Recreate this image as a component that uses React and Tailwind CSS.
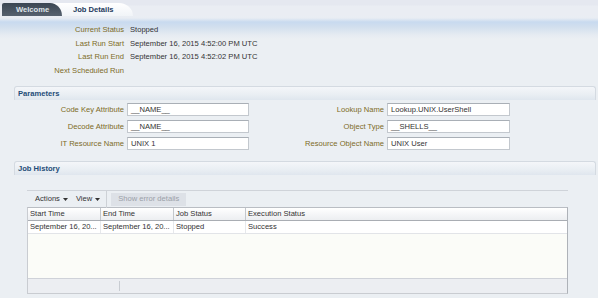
import React from "react";

function Caret() {
  return (
    <svg width="5" height="3" viewBox="0 0 5 3" className="ml-[3px] mt-[1px]">
      <path d="M0 0 L5 0 L2.5 3 Z" fill="#333" />
    </svg>
  );
}

function InfoRow({ label, value }) {
  return (
    <div className="flex h-[13.5px] items-center">
      <div className="w-[124px] text-right text-[#7d6b26]">{label}</div>
      <div className="ml-[6px] text-[#333]">{value}</div>
    </div>
  );
}

function Field({ label, value, labelW, inputW }) {
  return (
    <div className="flex h-[17px] items-center">
      <div className="text-right text-[#7d6b26]" style={{ width: labelW }}>
        {label}
      </div>
      <div
        className="ml-[3px] h-[13px] border border-[#c3c8ce] border-t-[#a9afb6] bg-white pl-[3px] leading-[11px] text-[#333]"
        style={{ width: inputW }}
      >
        {value}
      </div>
    </div>
  );
}

function SectionHeader({ title }) {
  return (
    <div className="flex h-[14px] items-center rounded-t-[3px] border-l border-r border-t border-[#d4dae1] bg-[linear-gradient(to_bottom,#f4f6f9,#e9eef3_60%,#dfe6ee)] pl-[3px] font-bold text-[#1f4d78]">
      {title}
    </div>
  );
}

export default function App() {
  return (
    <div className="h-[298px] w-[598px] overflow-hidden bg-[#ebeff3] font-['Liberation_Sans',Arial,sans-serif] text-[7.6px] text-[#333]">
      {/* Tabs */}
      <div className="flex h-[16px] items-end bg-[linear-gradient(to_bottom,#e5e8f0_0px,#e5e8f0_5px,#eaedf3_6px)] pl-[2px]">
        <div className="relative z-10 flex h-[13px] w-[60px] items-center rounded-tl-[2px] rounded-tr-[12px_13px] bg-[linear-gradient(to_bottom,#3b4653,#56616e)] pl-[14px] font-bold text-[#dfe4ea]">
          Welcome
        </div>
        <div className="-ml-[12px] flex h-[13px] w-[83px] items-center rounded-tr-[14px_13px] bg-[linear-gradient(to_bottom,#ffffff,#f1f4f8)] pl-[23px] font-bold text-[#1d3a5c]">
          Job Details
        </div>
      </div>

      {/* Info */}
      <div className="bg-[linear-gradient(to_bottom,#eaeef4_0px,#e9edf3_2px,#c8daef_6px,#d2dfee_11px,#e6ebf2_19px,#ebeff3_23px)] pt-[7px]">
        <InfoRow label="Current Status" value="Stopped" />
        <InfoRow label="Last Run Start" value="September 16, 2015 4:52:00 PM UTC" />
        <InfoRow label="Last Run End" value="September 16, 2015 4:52:02 PM UTC" />
        <InfoRow label="Next Scheduled Run" value="" />
      </div>

      {/* Parameters */}
      <div className="ml-[14px] mr-[2px] mt-[9px]">
        <SectionHeader title="Parameters" />
        <div className="flex pt-[1px]">
          <div className="flex flex-col">
            <Field label="Code Key Attribute" value="__NAME__" labelW={110} inputW={122} />
            <Field label="Decode Attribute" value="__NAME__" labelW={110} inputW={122} />
            <Field label="IT Resource Name" value="UNIX 1" labelW={110} inputW={122} />
          </div>
          <div className="flex flex-col">
            <Field label="Lookup Name" value="Lookup.UNIX.UserShell" labelW={135} inputW={123} />
            <Field label="Object Type" value="__SHELLS__" labelW={135} inputW={123} />
            <Field label="Resource Object Name" value="UNIX User" labelW={135} inputW={123} />
          </div>
        </div>
      </div>

      {/* Job History */}
      <div className="ml-[14px] mr-[2px] mt-[9px]">
        <SectionHeader title="Job History" />
        <div className="ml-[13px] mt-[15px] w-[541px]">
          {/* toolbar */}
          <div className="flex h-[17px] items-center border-t border-[#cfd3d9]">
            <div className="flex items-center pl-[8px]">
              Actions
              <Caret />
            </div>
            <div className="ml-[8px] flex items-center">
              View
              <Caret />
            </div>
            <div className="ml-[6px] h-[17px] w-px bg-[#cdd1d6]" />
            <div className="ml-[4px] flex h-[13px] w-[75px] items-center justify-center bg-[#dde1e7] text-[#9aa0a8]">
              Show error details
            </div>
          </div>
          {/* table */}
          <div className="flex h-[87px] flex-col border border-t-[#b9bdc3] border-[#c9ccd1] border-r-[#aeb2b8]">
            <div className="flex h-[13px] border-b border-[#a9adb3] bg-[linear-gradient(to_bottom,#ffffff,#eceef1)]">
              <div className="w-[73px] border-r border-[#c3c7cc] pl-[2px] leading-[12px]">Start Time</div>
              <div className="w-[73px] border-r border-[#c3c7cc] pl-[2px] leading-[12px]">End Time</div>
              <div className="w-[72px] border-r border-[#c3c7cc] pl-[2px] leading-[12px]">Job Status</div>
              <div className="flex-1 pl-[2px] leading-[12px]">Execution Status</div>
            </div>
            <div className="flex h-[13px] border-b border-[#e2e4e8] bg-white">
              <div className="w-[73px] border-r border-[#e6e8eb] pl-[2px] leading-[12px]">September 16, 20...</div>
              <div className="w-[73px] border-r border-[#e6e8eb] pl-[2px] leading-[12px]">September 16, 20...</div>
              <div className="w-[72px] border-r border-[#e6e8eb] pl-[2px] leading-[12px]">Stopped</div>
              <div className="flex-1 pl-[2px] leading-[12px]">Success</div>
            </div>
            <div className="flex-1 bg-[#fbfcf8]" />
            <div className="flex h-[15px] items-center border-t border-[#cfd2d9] bg-[#eceef2]">
              <div className="ml-[91px] h-[10px] w-px bg-[#c8ccd2]" />
            </div>
          </div>
        </div>
      </div>
    </div>
  );
}
